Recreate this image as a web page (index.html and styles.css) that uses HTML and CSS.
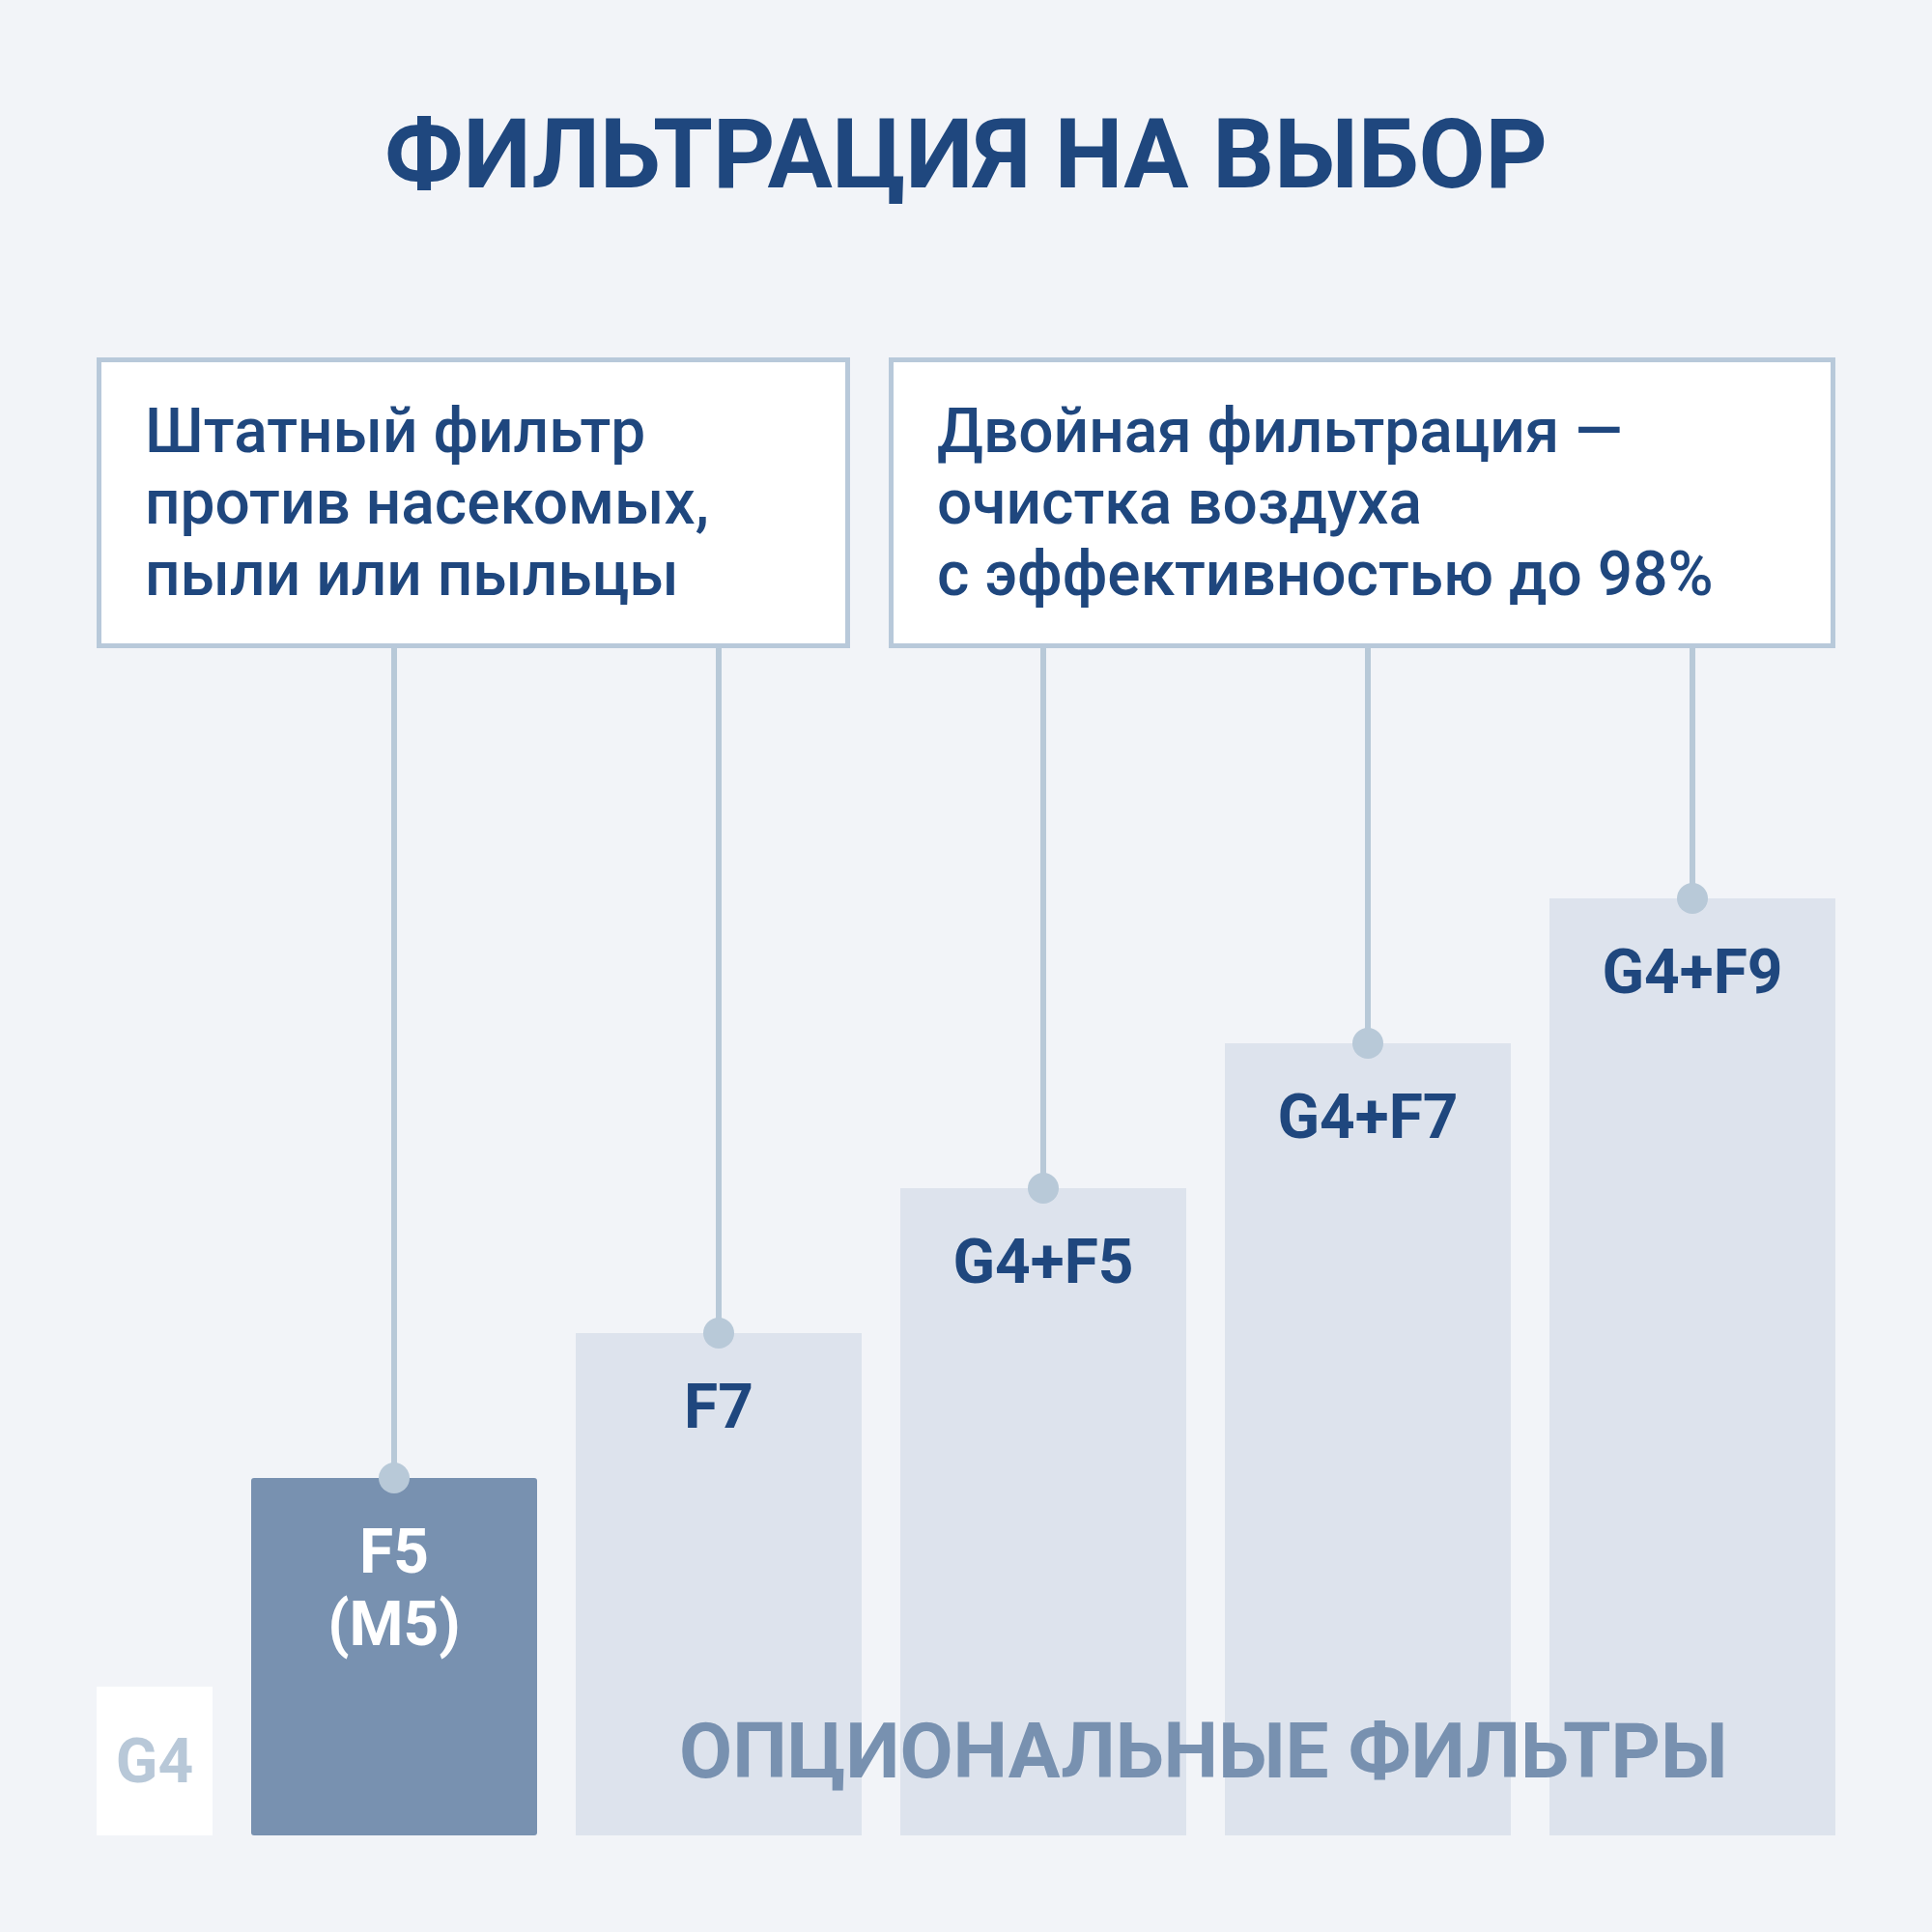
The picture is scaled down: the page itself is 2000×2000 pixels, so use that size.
FILE: index.html
```html
<!DOCTYPE html>
<html lang="ru">
<head>
<meta charset="utf-8">
<title>Фильтрация на выбор</title>
<link rel="stylesheet" href="styles.css">
</head>
<body>
<div class="page">
  <h1 class="title">ФИЛЬТРАЦИЯ НА ВЫБОР</h1>
  <div class="notes">
    <div class="note note-std"><p>Штатный фильтр<br>против насекомых,<br>пыли или пыльцы</p></div>
    <div class="note note-dual"><p>Двойная фильтрация —<br>очистка воздуха<br>с эффективностью до 98%</p></div>
  </div>
  <div class="chart">
    <div class="base"><span>G4</span></div>
    <div class="col"><div class="stem"></div><div class="bar bar-main" style="height:370px">F5<br>(M5)</div></div>
    <div class="col"><div class="stem"></div><div class="bar" style="height:520px">F7</div></div>
    <div class="col"><div class="stem"></div><div class="bar" style="height:670px">G4+F5</div></div>
    <div class="col"><div class="stem"></div><div class="bar" style="height:820px">G4+F7</div></div>
    <div class="col"><div class="stem"></div><div class="bar" style="height:970px">G4+F9</div></div>
    <div class="optional">ОПЦИОНАЛЬНЫЕ ФИЛЬТРЫ</div>
  </div>
</div>
</body>
</html>
```

FILE: styles.css
```css
* { box-sizing: border-box; }
html, body {
  margin: 0;
  padding: 0;
  background: #f2f4f8;
}
body {
  font-family: Roboto, "Liberation Sans", sans-serif;
  color: #1f477e;
}
.page {
  width: 2000px;
  height: 2000px;
  padding: 100px 100px 0;
  display: flex;
  flex-direction: column;
}
.title {
  margin: 0;
  font-size: 100px;
  line-height: 120px;
  font-weight: 700;
  text-align: center;
  color: #1f477e;
}
.notes {
  margin-top: 150px;
  display: flex;
  gap: 40px;
  height: 301px;
}
.note {
  background: #ffffff;
  border: 5px solid #b8c9da;
  display: flex;
  align-items: center;
  padding: 0 45px;
}
.note p {
  margin: 0;
  font-size: 64px;
  line-height: 74px;
  font-weight: 500;
  color: #1f477e;
}
.note-std { width: 780px; }
.note-dual { flex: 1; }
.chart {
  position: relative;
  height: 1229px;
  display: flex;
  align-items: flex-end;
  gap: 40px;
}
.base {
  width: 120px;
  height: 154px;
  background: #ffffff;
  display: flex;
  align-items: center;
  justify-content: center;
  font-size: 64px;
  line-height: 75px;
  font-weight: 700;
  color: #b8c8d8;
}
.col {
  width: 296px;
  height: 100%;
  display: flex;
  flex-direction: column;
  align-items: center;
}
.stem {
  flex: 1;
  width: 6px;
  background: #b8c9d8;
}
.bar {
  position: relative;
  width: 100%;
  background: #dde3ed;
  text-align: center;
  padding-top: 39px;
  font-size: 64px;
  line-height: 75px;
  font-weight: 700;
  color: #1f477e;
}
.bar::before {
  content: "";
  position: absolute;
  top: -16px;
  left: 50%;
  width: 32px;
  height: 32px;
  margin-left: -16px;
  border-radius: 50%;
  background: #b8c9d8;
}
.bar-main {
  background: #7891b0;
  color: #ffffff;
  border-radius: 3px;
}
.optional {
  position: absolute;
  left: 603px;
  bottom: 47px;
  white-space: nowrap;
  font-size: 80px;
  line-height: 80px;
  font-weight: 700;
  color: #7891b0;
}
```
